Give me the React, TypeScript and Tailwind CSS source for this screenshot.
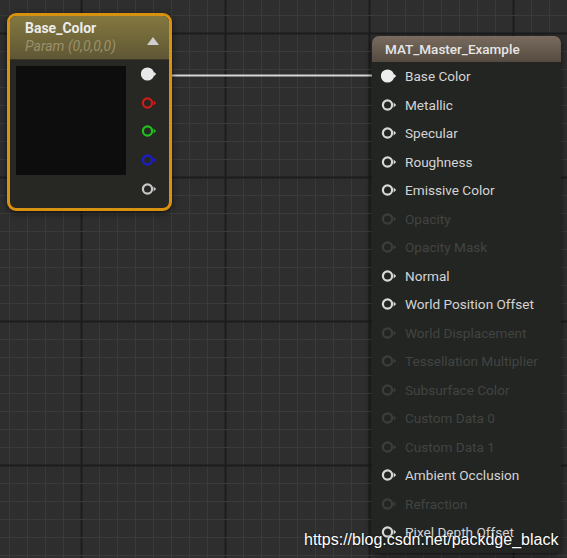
import React from "react";

const W = 567;
const H = 558;

const inputs: { label: string; on: boolean; linked?: boolean }[] = [
  { label: "Base Color", on: true, linked: true },
  { label: "Metallic", on: true },
  { label: "Specular", on: true },
  { label: "Roughness", on: true },
  { label: "Emissive Color", on: true },
  { label: "Opacity", on: false },
  { label: "Opacity Mask", on: false },
  { label: "Normal", on: true },
  { label: "World Position Offset", on: true },
  { label: "World Displacement", on: false },
  { label: "Tessellation Multiplier", on: false },
  { label: "Subsurface Color", on: false },
  { label: "Custom Data 0", on: false },
  { label: "Custom Data 1", on: false },
  { label: "Ambient Occlusion", on: true },
  { label: "Refraction", on: false },
  { label: "Pixel Depth Offset", on: true },
];

function Pin({ color, filled }: { color: string; filled?: boolean }) {
  return (
    <svg width="17" height="14" viewBox="0 0 17 14">
      <circle cx="6.5" cy="7" r={filled ? 5.5 : 4.6} fill={filled ? color : "none"} stroke={color} strokeWidth="2.2" />
      <path d="M12.6 4.6 L15.2 7 L12.6 9.4 Z" fill={color} />
    </svg>
  );
}

function Grid() {
  const xs = Array.from({ length: 33 }, (_, i) => 9 + i * 18);
  const ys = Array.from({ length: 32 }, (_, i) => 15 + i * 18);
  return (
    <svg className="absolute inset-0" width={W} height={H}>
      <rect width={W} height={H} fill="#2e2e2e" />
      {xs.map((x) => (
        <line key={"x" + x} x1={x + 0.5} y1={0} x2={x + 0.5} y2={H} stroke={(x - 81) % 144 === 0 ? "#1c1c1c" : "#3a3a3a"} strokeWidth={(x - 81) % 144 === 0 ? 2 : 1} />
      ))}
      {ys.map((y) => (
        <line key={"y" + y} x1={0} y1={y + 0.5} x2={W} y2={y + 0.5} stroke={(y - 33) % 144 === 0 ? "#1c1c1c" : "#3a3a3a"} strokeWidth={(y - 33) % 144 === 0 ? 2 : 1} />
      ))}
      <line x1={158} y1={75.5} x2={386} y2={75.5} stroke="#d6d6d6" strokeWidth="2" />
    </svg>
  );
}

function ParamNode() {
  const pins = [
    { c: "#e8e8e8", f: true },
    { c: "#d11b1b" },
    { c: "#1fc21f" },
    { c: "#1c1cd0" },
    { c: "#c8c8c8" },
  ];
  return (
    <div className="absolute left-[7px] top-[13px] w-[165px] h-[198px] rounded-[9px] border-[3px] border-[#d9920f] bg-[#272724] shadow-[0_2px_6px_rgba(0,0,0,0.6)] overflow-hidden">
      <div className="h-[44px] bg-gradient-to-b from-[#84783f] to-[#5f5735] border-b border-[#3a3623] pl-[15px] pr-[8px] pt-[3px] flex justify-between">
        <div className="leading-[18px] text-[14px] font-['Roboto',sans-serif]">
          <div className="font-bold text-[#ececec]">Base_Color</div>
          <div className="italic text-[#9a9068]">Param (0,0,0,0)</div>
        </div>
        <svg width="14" height="10" viewBox="0 0 14 10" className="mt-[17px] mr-[1px]">
          <path d="M7 1 L13 9 L1 9 Z" fill="#cfcfcf" />
        </svg>
      </div>
      <div className="flex pl-[6px] pt-[6px]">
        <div className="w-[110px] h-[109px] bg-[#0d0d0d]" />
        <div className="ml-[15px] -mt-[6px] flex flex-col">
          {pins.map((p, i) => (
            <div key={i} className="h-[28.6px] flex items-center">
              <Pin color={p.c} filled={p.f} />
            </div>
          ))}
        </div>
      </div>
    </div>
  );
}

function MaterialNode() {
  return (
    <div className="absolute left-[372px] top-[36px] w-[189px] h-[517px] rounded-[7px] bg-[#232523] shadow-[0_2px_6px_rgba(0,0,0,0.6)] overflow-hidden font-['Roboto',sans-serif]">
      <div className="h-[26px] bg-gradient-to-b from-[#796b5e] to-[#564b41] pl-[13px] flex items-center text-[13.5px] font-medium text-[#e6e6e6]">
        MAT_Master_Example
      </div>
      <div className="flex flex-col pl-[9px]">
        {inputs.map((r) => (
          <div key={r.label} className="h-[28.5px] flex items-center gap-[7px] text-[13.6px]">
            <Pin color={r.linked ? "#ededed" : r.on ? "#d8d8d8" : "#3c3e3c"} filled={r.linked} />
            <span className={r.on ? "text-[#d4d4d4]" : "text-[#414441]"}>{r.label}</span>
          </div>
        ))}
      </div>
    </div>
  );
}

export default function App() {
  return (
    <div className="relative w-[567px] h-[558px] overflow-hidden bg-[#2e2e2e]">
      <Grid />
      <ParamNode />
      <MaterialNode />
      <div className="absolute left-[304px] top-[528px] text-[16px] text-white font-['Liberation_Sans',sans-serif] [text-shadow:0_0_2px_rgba(0,0,0,0.8)]">
        https://blog.csdn.net/packdge_black
      </div>
    </div>
  );
}
